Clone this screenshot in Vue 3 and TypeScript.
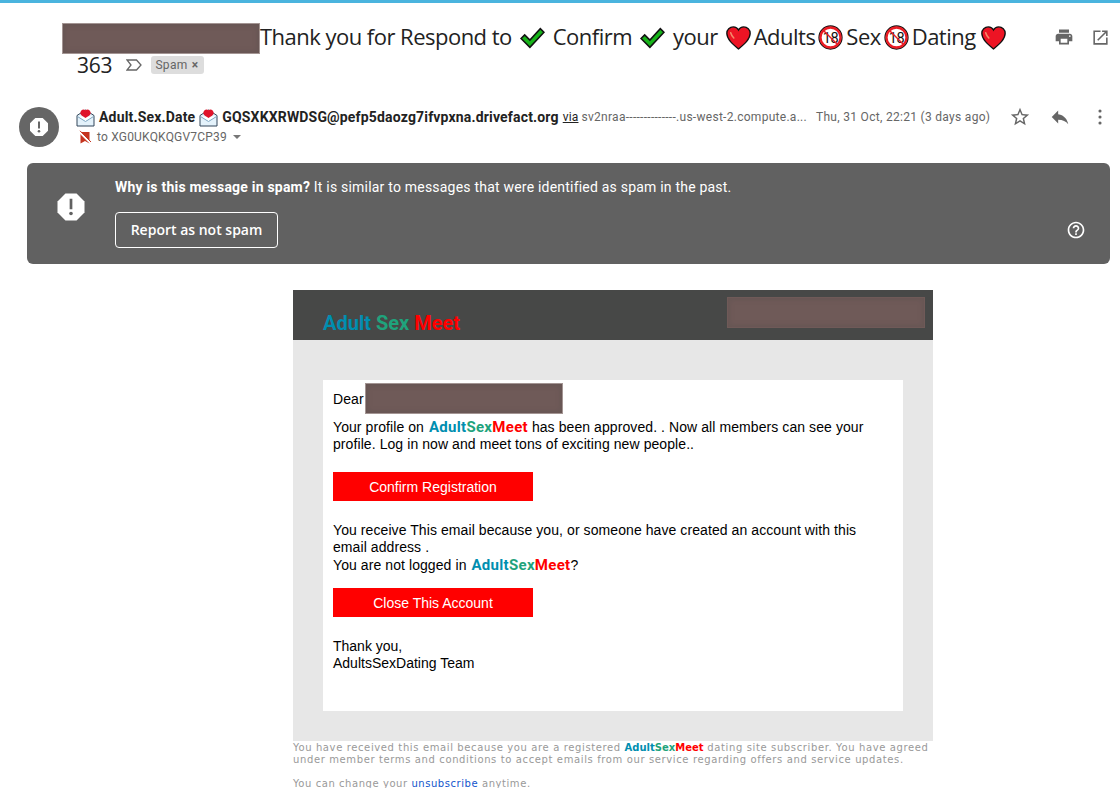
<script setup lang="ts">
const brand = [
  { text: 'Adult', cls: 'teal' },
  { text: 'Sex', cls: 'green' },
  { text: 'Meet', cls: 'red' },
]
const subjectAfter = 'your'
</script>

<template>
  <div class="page">
    <svg width="0" height="0" class="defs">
      <defs>
        <symbol id="check" viewBox="0 0 24 24">
          <path d="M1 13 4.500 9.500l5 5L19.500 3.500 23 7 9.500 21.500z" fill="#17b51a" stroke="#111" stroke-width="1.500" stroke-linejoin="miter" />
        </symbol>
        <symbol id="heart" viewBox="0 0 24 24">
          <path d="M12 23C6 18 .8 13.500.8 8A6.200 6.200 0 0 1 7 1.800c2.300 0 4 1 5 3 1-2 2.700-3 5-3A6.200 6.200 0 0 1 23.200 8c0 5.500-5.200 10-11.200 15z" fill="#ed1424" stroke="#111" stroke-width="1.300" />
          <path d="M4.500 7.500c.5 2 1.500 3.500 3 5" fill="none" stroke="#f58a6a" stroke-width="1.500" stroke-linecap="round" />
        </symbol>
        <symbol id="no18" viewBox="0 0 24 24">
          <circle cx="12" cy="12" r="11" fill="#fff" stroke="#111" stroke-width="1.300" />
          <circle cx="12" cy="12" r="9.600" fill="none" stroke="#ea1c24" stroke-width="2.200" />
          <text x="12" y="17" text-anchor="middle" font-size="14" font-family="Roboto, sans-serif" fill="#111" letter-spacing="-.5">18</text>
          <path d="M5.500 5.500 18.500 18.500" stroke="#ea1c24" stroke-width="1.400" />
        </symbol>
        <symbol id="mail" viewBox="0 0 19 19">
          <path d="M1 7.500 9.500 2 18 7.500V18H1z" fill="#e4f2fb" stroke="#33475a" stroke-width="1" />
          <path d="M1.500 8.500 9.500 13.500l8-5" fill="#fff" stroke="#7ea6c2" stroke-width="1" />
          <path d="M9.500 10C7 8.500 4.300 7 4.300 5 4.300 3.200 6 1.500 7.500 1.500c.9 0 1.500.3 2 .8.500-.5 1.100-.8 2-.8 1.500 0 3.200 1.700 3.200 3.500 0 2-2.700 3.500-5.200 5z" fill="#e0132a" />
        </symbol>
      </defs>
    </svg>

    <div class="top-bar"></div>

    <header class="subject">
      <div class="subject-line">
        <span class="redact redact-subject"></span>
        <span>Thank you for Respond to</span>
        <svg class="emoji gap-l"><use href="#check" /></svg>
        <span class="gap-l">Confirm</span>
        <svg class="emoji gap-l"><use href="#check" /></svg>
        <span class="gap-l">{{ subjectAfter }}</span>
        <svg class="emoji gap-l"><use href="#heart" /></svg>
        <span class="gap-s">Adults</span>
        <svg class="emoji gap-s"><use href="#no18" /></svg>
        <span class="gap-s">Sex</span>
        <svg class="emoji gap-s"><use href="#no18" /></svg>
        <span class="gap-s">Dating</span>
        <svg class="emoji gap-m"><use href="#heart" /></svg>
      </div>
      <div class="subject-actions">
        <svg width="20" height="20" viewBox="0 0 24 24" fill="#666"><path d="M19 8H5c-1.660 0-3 1.340-3 3v6h4v4h12v-4h4v-6c0-1.660-1.340-3-3-3zm-3 11H8v-5h8v5zm3-7c-.55 0-1-.45-1-1s.45-1 1-1 1 .45 1 1-.45 1-1 1zm-1-9H6v4h12V3z" /></svg>
        <svg width="19" height="19" viewBox="0 0 24 24" fill="#666"><path d="M19 19H5V5h7V3H3v18h18v-9h-2v7zM14 3v2h3.590l-9.830 9.830 1.410 1.410L19 6.410V10h2V3h-7z" /></svg>
      </div>
    </header>

    <div class="subject-second">
      <span class="count">363</span>
      <svg class="label-arrow" width="16" height="12" viewBox="0 0 16 12" fill="none" stroke="#666" stroke-width="1.300"><path d="M1 1h9.500L15 6l-4.500 5H1l4-5z" /></svg>
      <span class="chip">Spam <i>×</i></span>
    </div>

    <section class="sender">
      <div class="avatar">
        <svg width="20" height="20" viewBox="0 0 20 20"><path d="M6.300 1h7.400L19 6.300v7.400L13.700 19H6.300L1 13.700V6.300z" fill="#fff" /><rect x="9" y="4.500" width="2" height="7" fill="#666" /><circle cx="10" cy="14.300" r="1.300" fill="#666" /></svg>
      </div>
      <div class="sender-main">
        <div class="sender-row">
          <svg class="mail"><use href="#mail" /></svg>
          <b class="name">Adult.Sex.Date</b>
          <svg class="mail mail-second"><use href="#mail" /></svg>
          <b class="address">GQSXKXRWDSG@pefp5daozg7ifvpxna.drivefact.org</b>
          <span class="via">via</span>
          <span class="relay">sv2nraa--------------.us-west-2.compute.a...</span>
          <span class="date">Thu, 31 Oct, 22:21 (3 days ago)</span>
          <div class="row-actions">
            <svg width="22" height="22" viewBox="0 0 24 24" fill="#666"><path d="M22 9.240l-7.190-.62L12 2 9.190 8.630 2 9.240l5.460 4.730L5.820 21 12 17.270 18.180 21l-1.630-7.030L22 9.240zM12 15.400l-3.760 2.270 1-4.280-3.320-2.880 4.380-.38L12 6.100l1.710 4.040 4.380.38-3.320 2.880 1 4.280L12 15.400z" /></svg>
            <svg width="22" height="22" viewBox="0 0 24 24" fill="#666"><path d="M10 9V5l-7 7 7 7v-4.100c5 0 8.500 1.600 11 5.100-1-5-4-10-11-11z" /></svg>
            <svg width="22" height="22" viewBox="0 0 24 24" fill="#666"><circle cx="12" cy="5.500" r="1.700" /><circle cx="12" cy="12" r="1.700" /><circle cx="12" cy="18.500" r="1.700" /></svg>
          </div>
        </div>
        <div class="to-row">
          <svg width="14" height="14" viewBox="0 0 14 14"><path d="M2.500 2h9v11.500L7 11l-4.500 2.500z" fill="#c5341f" /><path d="M1 1.500 12.500 13" stroke="#fff" stroke-width="2" /><path d="M2 .8 13 12" stroke="#c5341f" stroke-width="1" /></svg>
          <span>to XG0UKQKQGV7CP39</span>
          <i class="caret"></i>
        </div>
      </div>
    </section>

    <section class="banner">
      <svg class="banner-icon" width="30" height="30" viewBox="0 0 20 20"><path d="M6.300 1h7.400L19 6.300v7.400L13.700 19H6.300L1 13.700V6.300z" fill="#fff" /><rect x="9.100" y="4.500" width="1.800" height="7" fill="#616161" /><circle cx="10" cy="14.300" r="1.200" fill="#616161" /></svg>
      <div class="banner-body">
        <p><b>Why is this message in spam?</b> It is similar to messages that were identified as spam in the past.</p>
        <button class="not-spam" type="button">Report as not spam</button>
      </div>
      <svg class="help" width="20" height="20" viewBox="0 0 24 24" fill="#fff"><path d="M11 18h2v-2h-2v2zm1-16C6.480 2 2 6.480 2 12s4.480 10 10 10 10-4.480 10-10S17.520 2 12 2zm0 18c-4.410 0-8-3.590-8-8s3.590-8 8-8 8 3.590 8 8-3.590 8-8 8zm0-14c-2.210 0-4 1.790-4 4h2c0-1.100.9-2 2-2s2 .9 2 2c0 2-3 1.750-3 5h2c0-2.250 3-2.500 3-5 0-2.210-1.790-4-4-4z" /></svg>
    </section>

    <main class="email">
      <div class="email-head">
        <div class="logo"><span class="teal">Adult</span> <span class="green">Sex</span> <span class="red">Meet</span></div>
        <span class="redact redact-head"></span>
      </div>
      <div class="email-body">
        <div class="card">
          <div class="dear">Dear<span class="redact redact-name"></span></div>
          <p class="intro">
            Your profile on
            <b class="brand"><span v-for="b in brand" :key="b.text" :class="b.cls">{{ b.text }}</span></b>
            has been approved. . Now all members can see your profile. Log in now and meet tons of exciting new people..
          </p>
          <a class="cta">Confirm Registration</a>
          <p class="why">
            You receive This email because you, or someone have created an account with this email address .<br />
            You are not logged in
            <b class="brand"><span v-for="b in brand" :key="b.text" :class="b.cls">{{ b.text }}</span></b>?
          </p>
          <a class="cta">Close This Account</a>
          <p class="thanks">Thank you,<br />AdultsSexDating Team</p>
        </div>
      </div>
      <footer class="legal">
        <p>
          You have received this email because you are a registered
          <b class="brand"><span v-for="b in brand" :key="b.text" :class="b.cls">{{ b.text }}</span></b>
          dating site subscriber. You have agreed under member terms and conditions to accept emails from our service regarding offers and service updates.
        </p>
        <p class="unsub">You can change your <a>unsubscribe</a> anytime.</p>
      </footer>
    </main>
  </div>
</template>

<style>
html,
body {
  margin: 0;
  background: #fff;
}
</style>

<style scoped>
.page {
  height: 788px;
  overflow: hidden;
  font-family: Roboto, "Liberation Sans", sans-serif;
  color: #222;
}
.defs {
  position: absolute;
}
.top-bar {
  height: 3px;
  background: #4ab4de;
}
.redact {
  display: inline-block;
  box-sizing: border-box;
  background: #6f5a58;
  border: 1px solid #a39593;
  box-shadow: inset 0 0 4px 2px #675654;
}

.subject {
  display: flex;
  justify-content: space-between;
  padding: 20px 10px 0 62px;
}
.subject-line {
  display: flex;
  align-items: flex-start;
  height: 31px;
  font-family: "Open Sans", sans-serif;
  font-size: 22px;
  line-height: 26px;
  letter-spacing: -0.52px;
  white-space: nowrap;
}
.redact-subject {
  width: 198px;
  height: 31px;
}
.emoji {
  width: 25px;
  height: 25px;
  flex: none;
  margin-top: 2px;
}
.gap-l {
  margin-left: 8px;
}
.gap-s {
  margin-left: 3px;
}
.gap-m {
  margin-left: 5px;
}
.subject-actions {
  display: flex;
  gap: 17px;
  align-items: center;
  height: 28px;
}
.subject-second {
  display: flex;
  align-items: center;
  height: 22px;
  padding-left: 77px;
}
.count {
  font-family: "Open Sans", sans-serif;
  font-size: 21px;
  letter-spacing: -0.2px;
}
.label-arrow {
  margin-left: 14px;
}
.chip {
  margin-left: 9px;
  padding: 0 5px 0 4px;
  height: 18px;
  line-height: 18px;
  border-radius: 3px;
  background: #ddd;
  color: #666;
  font-size: 12px;
  letter-spacing: 0.3px;
}
.chip i {
  font-style: normal;
  font-weight: 700;
  margin-left: 1px;
}

.sender {
  display: flex;
  gap: 17px;
  padding: 31px 9px 0 19px;
}
.avatar {
  width: 40px;
  height: 40px;
  flex: none;
  border-radius: 50%;
  background: #666;
  display: flex;
  align-items: center;
  justify-content: center;
}
.sender-main {
  flex: 1;
  min-width: 0;
}
.sender-row {
  display: flex;
  align-items: center;
  height: 20px;
  white-space: nowrap;
  font-size: 14px;
  letter-spacing: 0.17px;
}
.mail {
  width: 19px;
  height: 19px;
  flex: none;
}
.name {
  margin-left: 4px;
}
.mail-second {
  margin-left: 4px;
}
.address {
  margin-left: 4px;
}
.via {
  margin-left: 4px;
  font-size: 12px;
  text-decoration: underline;
}
.relay {
  margin-left: 3px;
  font-size: 12px;
  color: #666;
  letter-spacing: 0.28px;
}
.date {
  margin-left: 9px;
  font-size: 12px;
  color: #666;
  letter-spacing: 0.3px;
}
.row-actions {
  display: flex;
  gap: 18px;
  margin-left: auto;
}
.to-row {
  display: flex;
  align-items: center;
  gap: 5px;
  height: 20px;
  padding-left: 2px;
  font-size: 12px;
  letter-spacing: 0.2px;
  color: #666;
}
.caret {
  margin-left: 1px;
  border: 4px solid transparent;
  border-top-color: #777;
  border-bottom-width: 0;
}

.banner {
  display: flex;
  align-items: flex-start;
  height: 101px;
  margin: 16px 10px 0 27px;
  box-sizing: border-box;
  padding: 15px 24px 0 29px;
  border-radius: 6px;
  background: #616161;
  color: #fff;
}
.banner-icon {
  margin-top: 14px;
  flex: none;
}
.banner-body {
  flex: 1;
  margin-left: 29px;
}
.banner-body p {
  margin: 0;
  font-size: 14px;
  line-height: 18px;
  letter-spacing: 0.21px;
}
.not-spam {
  display: block;
  margin-top: 16px;
  width: 163px;
  height: 36px;
  padding: 0 0 2px;
  border: 1px solid #fff;
  border-radius: 4px;
  background: transparent;
  color: #fff;
  font-family: "Open Sans", sans-serif;
  font-size: 14px;
  font-weight: 600;
}
.help {
  align-self: flex-start;
  margin-top: 42px;
}

.email {
  width: 640px;
  margin: 26px 0 0 293px;
}
.email-head {
  display: flex;
  justify-content: space-between;
  height: 50px;
  padding: 7px 8px 0 30px;
  box-sizing: border-box;
  background: #474847;
}
.logo {
  align-self: flex-end;
  margin-bottom: 5px;
  font-size: 20px;
  font-weight: 700;
}
.redact-head {
  width: 198px;
  height: 31px;
  border-color: #6f5a58;
}
.teal {
  color: #008eb0;
}
.green {
  color: #1fa37c;
}
.red {
  color: #f00;
}
.email-body {
  height: 401px;
  box-sizing: border-box;
  padding: 40px 30px 30px;
  background: #e7e7e7;
}
.card {
  box-sizing: border-box;
  height: 331px;
  padding: 3px 10px 0;
  background: #fff;
  font-family: "Liberation Sans", Arial, sans-serif;
  font-size: 14px;
  line-height: 17px;
  letter-spacing: 0.08px;
  color: #000;
}
.dear {
  display: flex;
  align-items: center;
  height: 31px;
  padding-top: 1px;
  box-sizing: border-box;
}
.redact-name {
  width: 198px;
  height: 31px;
  margin: -1px 0 0 1.5px;
}
.brand {
  font-family: "DejaVu Sans", Verdana, sans-serif;
}
.card .brand {
  font-family: Roboto, sans-serif;
  font-size: 15px;
  letter-spacing: 0.3px;
  line-height: 17px;
  margin-left: 1px;
}
.why .brand {
  line-height: 19px;
}
.intro {
  margin: 5px 0 0;
}
.cta {
  display: block;
  width: 200px;
  height: 29px;
  margin-top: 19px;
  line-height: 30px;
  text-align: center;
  background: #f00;
  color: #fff;
  letter-spacing: 0;
}
.why {
  margin: 21px 0 0;
}
.why + .cta {
  margin-top: 13px;
}
.thanks {
  margin: 21px 0 0;
  letter-spacing: 0;
}
.legal {
  padding-top: 1px;
  font-family: "DejaVu Sans", Verdana, sans-serif;
  font-size: 10px;
  line-height: 12px;
  letter-spacing: 0.62px;
  color: #999;
}
.legal p {
  margin: 0;
}
.legal .brand {
  font-size: 10px;
  letter-spacing: 0;
}
.legal .unsub {
  margin-top: 12px;
  letter-spacing: 0.56px;
}
.unsub a {
  color: #1155cc;
}
</style>
